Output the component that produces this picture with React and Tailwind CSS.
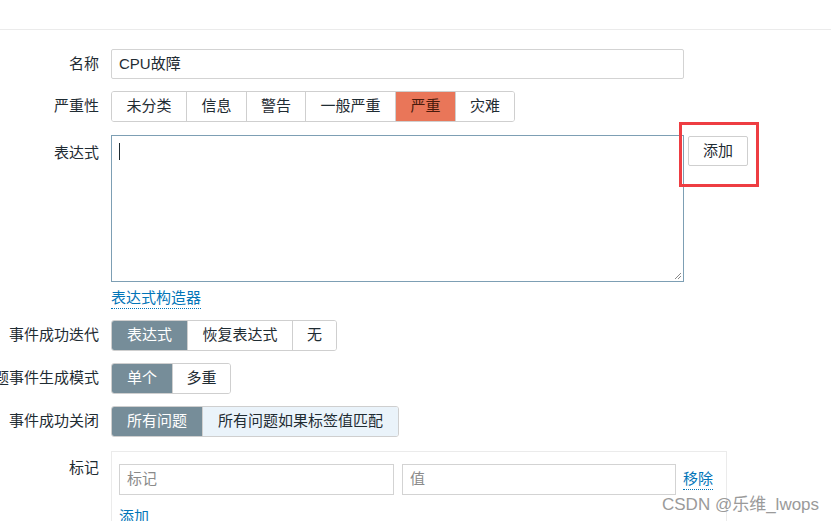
import React from 'react';

const font = { fontFamily: '"Liberation Sans", "Noto Sans CJK SC", sans-serif' };

function Label({ children, className = '' }) {
    return (
        <div className={`flex w-[99px] shrink-0 justify-end whitespace-nowrap text-[15px] text-[#1f2c33] ${className}`}>
            {children}
        </div>
    );
}

function Segmented({ items, active, activeClass = 'bg-[#768d99] text-white', extra = {} }) {
    return (
        <div className="flex h-[31px] overflow-hidden rounded-[3px] border border-[#cfcfcf]">
            {items.map((item, i) => (
                <div
                    key={item.label}
                    className={`flex items-center justify-center text-[15px] ${i > 0 ? 'border-l border-[#cfcfcf]' : ''} ${i === active ? activeClass : extra[i] || 'bg-white text-[#1f2c33]'}`}
                    style={{ width: item.w }}
                >
                    {item.label}
                </div>
            ))}
        </div>
    );
}

export default function App() {
    return (
        <div className="relative h-[521px] w-[831px] overflow-hidden bg-white" style={font}>
            <div className="h-[30px] border-b border-[#ebebeb]" />

            <div className="flex flex-col pt-[19px]">
                {/* 名称 */}
                <div className="flex items-center">
                    <Label>名称</Label>
                    <div className="ml-[12px] flex h-[30px] w-[573px] items-center rounded-[2px] border border-[#d3d3d3] px-[7px] text-[15px] text-[#1f2c33]">
                        CPU故障
                    </div>
                </div>

                {/* 严重性 */}
                <div className="mt-[12px] flex items-center">
                    <Label>严重性</Label>
                    <div className="ml-[12px]">
                        <Segmented
                            active={4}
                            activeClass="bg-[#e97659] text-[#4a1a0c]"
                            items={[
                                { label: '未分类', w: 74 },
                                { label: '信息', w: 60 },
                                { label: '警告', w: 59 },
                                { label: '一般严重', w: 90 },
                                { label: '严重', w: 60 },
                                { label: '灾难', w: 59 },
                            ]}
                        />
                    </div>
                </div>

                {/* 表达式 */}
                <div className="mt-[13px] flex items-start">
                    <Label className="pt-[7px]">表达式</Label>
                    <div className="relative ml-[12px] h-[147px] w-[573px] border border-[#7d9fb4] bg-white">
                        <div className="ml-[7px] mt-[7px] h-[17px] w-px bg-[#1f2c33]" />
                        <svg className="absolute bottom-[1px] right-[1px]" width="9" height="9" viewBox="0 0 9 9">
                            <path d="M8 2 L2 8 M8 5 L5 8" stroke="#8a8a8a" strokeWidth="1" />
                        </svg>
                    </div>
                    <div className="relative ml-[4px] mt-[1px]">
                        <div className="flex h-[30px] w-[60px] items-center justify-center rounded-[2px] border border-[#cfcfcf] bg-white text-[15px] text-[#1f2c33]">
                            添加
                        </div>
                        <div className="absolute left-[-9px] top-[-14px] h-[65px] w-[80px] border-[3px] border-[#ee3d42]" />
                    </div>
                </div>

                {/* 表达式构造器 */}
                <div className="mt-[6px] flex">
                    <div className="w-[99px] shrink-0" />
                    <span className="ml-[12px] border-b border-dotted border-[#0275b8] text-[15px] leading-[20px] text-[#0275b8]">
                        表达式构造器
                    </span>
                </div>

                {/* 事件成功迭代 */}
                <div className="mt-[11px] flex items-center">
                    <Label>事件成功迭代</Label>
                    <div className="ml-[12px]">
                        <Segmented
                            active={0}
                            items={[
                                { label: '表达式', w: 75 },
                                { label: '恢复表达式', w: 105 },
                                { label: '无', w: 44 },
                            ]}
                        />
                    </div>
                </div>

                {/* 问题事件生成模式 */}
                <div className="mt-[12px] flex items-center">
                    <Label>问题事件生成模式</Label>
                    <div className="ml-[12px]">
                        <Segmented
                            active={0}
                            items={[
                                { label: '单个', w: 60 },
                                { label: '多重', w: 58 },
                            ]}
                        />
                    </div>
                </div>

                {/* 事件成功关闭 */}
                <div className="mt-[12px] flex items-center">
                    <Label>事件成功关闭</Label>
                    <div className="ml-[12px]">
                        <Segmented
                            active={0}
                            extra={{ 1: 'bg-[#eaf3fa] text-[#1f2c33]' }}
                            items={[
                                { label: '所有问题', w: 90 },
                                { label: '所有问题如果标签值匹配', w: 196 },
                            ]}
                        />
                    </div>
                </div>

                {/* 标记 */}
                <div className="mt-[14px] flex items-start">
                    <Label className="pt-[6px]">标记</Label>
                    <div className="ml-[12px] w-[616px] border border-[#ebebeb] px-[7px] pt-[12px]">
                        <div className="flex items-center">
                            <div className="flex h-[31px] w-[275px] items-center border border-[#d3d3d3] px-[7px] text-[15px] text-[#8a8a8a]">
                                标记
                            </div>
                            <div className="ml-[8px] flex h-[31px] w-[274px] items-center border border-[#d3d3d3] px-[7px] text-[15px] text-[#8a8a8a]">
                                值
                            </div>
                            <span className="ml-[7px] border-b border-dotted border-[#0275b8] text-[15px] leading-[20px] text-[#0275b8]">
                                移除
                            </span>
                        </div>
                        <div className="mt-[12px] text-[15px] leading-[20px] text-[#0275b8]">添加</div>
                    </div>
                </div>
            </div>

            <div className="absolute left-[662px] top-[492px] whitespace-nowrap text-[17px] text-[#9a9a9a]">
                CSDN @乐维_lwops
            </div>
        </div>
    );
}
